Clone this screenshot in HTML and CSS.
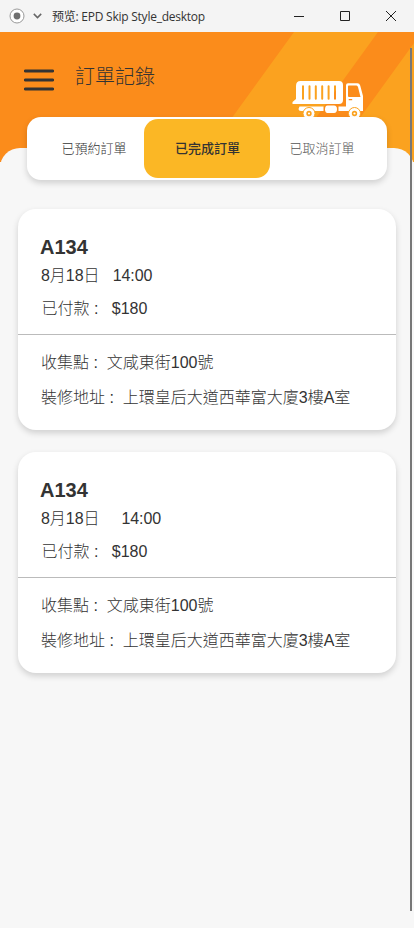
FILE: index.html
```html
<!DOCTYPE html>
<html lang="zh-Hant">
<head>
  <meta charset="UTF-8">
  <title>EPD Skip Style_desktop</title>
  <link rel="stylesheet" href="styles.css">
</head>
<body>
  <div class="titlebar">
    <svg class="app-icon" viewBox="0 0 16 16">
      <circle cx="8" cy="8" r="7" fill="#fff" stroke="#999" stroke-width="1"/>
      <circle cx="8" cy="8" r="3.4" fill="#707070"/>
    </svg>
    <svg class="chevron" viewBox="0 0 9 6"><path d="M.8 .9 4.5 4.6 8.2 .9" fill="none" stroke="#666" stroke-width="1.5"/></svg>
    <span class="window-title" lang="zh-Hans">预览: EPD Skip Style_desktop</span>
    <svg class="window-buttons" viewBox="0 0 104 12">
      <path d="M1 6.5h10M47.5 1.5h9v9h-9zM93 1l10 10M103 1 93 11" fill="none" stroke="#222"/>
    </svg>
  </div>

  <header class="header">
    <svg class="stripes" viewBox="0 0 414 130">
      <path d="M294 0h84l-94 130h-84zM414 11v119h-86z" fill="#fba21f"/>
    </svg>
    <svg class="menu" viewBox="0 0 30 22">
      <path d="M1.3 2h27.4M1.3 11h27.4M1.3 20h27.4" stroke="#333" stroke-width="2.8" stroke-linecap="round"/>
    </svg>
    <h1>訂單記錄</h1>
    <svg class="truck" viewBox="0 0 72 38">
      <!-- skip -->
      <path fill="#fff" fill-rule="evenodd" d="M8.500 0H47Q51 0 51 4V19Q51 23 47 23H0.500V21L4 18V5Q4 0 8.500 0zM11 4.200q-1 0-1 1v12.600q0 1 1 1t1-1V5.200q0-1-1-1zM17.500 4.200q-1 0-1 1v12.600q0 1 1 1t1-1V5.200q0-1-1-1zM23.800 4.200q-1 0-1 1v12.600q0 1 1 1t1-1V5.200q0-1-1-1zM30.200 4.200q-1 0-1 1v12.600q0 1 1 1t1-1V5.200q0-1-1-1zM36.600 4.200q-1 0-1 1v12.600q0 1 1 1t1-1V5.200q0-1-1-1zM43 4.200q-1 0-1 1v12.600q0 1 1 1t1-1V5.200q0-1-1-1z"/>
      <!-- cab -->
      <path fill="#fff" fill-rule="evenodd" d="M56 2.300H65.500Q67.500 2.300 68.200 4.500L71 15V30H54V4.300Q54 2.300 56 2.300zM56.800 4.500Q56 4.500 56 5.500V15Q56 16 57 16H68.500L66 6Q65.500 4.500 64.500 4.500zM56.700 18v1.200h3.500V18z"/>
      <!-- chassis -->
      <path fill="#fff" d="M7.500 25.500H31.500V30H9Q6.500 30 6.500 28zM35.500 24.500h6.500q3 0 3 3.700T42 32h-6.500q-2.500 0-2.500-3.700T35.500 24.500zM46.500 25.500h9V30h-9z"/>
      <g fill="#fff" stroke="#fba21f" stroke-width="1">
        <circle cx="17" cy="32.500" r="6"/>
        <circle cx="62.500" cy="32.500" r="6"/>
      </g>
      <g fill="none" stroke="#fba21f" stroke-width="1.600">
        <circle cx="17" cy="32.500" r="1.900"/>
        <circle cx="62.500" cy="32.500" r="1.900"/>
      </g>
    </svg>
  </header>

  <main class="sheet">
    <nav class="tabs">
      <a class="tab">已預約訂單</a>
      <a class="tab active">已完成訂單</a>
      <a class="tab">已取消訂單</a>
    </nav>

    <section class="card">
      <div class="summary">
        <h2>A134</h2>
        <p class="date">8月18日   14:00</p>
        <p class="paid">已付款 :   $180</p>
      </div>
      <div class="places">
        <p>收集點 :  文咸東街100號</p>
        <p>裝修地址 :  上環皇后大道西華富大廈3樓A室</p>
      </div>
    </section>

    <section class="card">
      <div class="summary">
        <h2>A134</h2>
        <p class="date">8月18日     14:00</p>
        <p class="paid">已付款 :   $180</p>
      </div>
      <div class="places">
        <p>收集點 :  文咸東街100號</p>
        <p>裝修地址 :  上環皇后大道西華富大廈3樓A室</p>
      </div>
    </section>
  </main>
  <div class="scrollbar"></div>
</body>
</html>
```
FILE: styles.css
```css
* {
  box-sizing: border-box;
  margin: 0;
  padding: 0;
}

body {
  height: 928px;
  overflow: hidden;
  background: #f7f7f7;
  color: #333;
  font-family: "Liberation Sans", "Noto Sans CJK TC", sans-serif;
  font-weight: 300;
}

svg {
  display: block;
}

/* Window title bar */
.titlebar {
  display: flex;
  align-items: center;
  height: 32px;
  padding: 0 17px 0 9px;
  background: #f4f4f4;
}

.app-icon {
  width: 16px;
  height: 16px;
}

.chevron {
  width: 9px;
  height: 6px;
  margin-left: 8px;
}

.window-title {
  margin-left: 10px;
  font: 400 12px "Open Sans", "Noto Sans CJK SC", sans-serif;
  letter-spacing: -0.24px;
  white-space: nowrap;
}

.window-buttons {
  width: 104px;
  height: 12px;
  margin-left: auto;
}

/* Header */
.header {
  position: relative;
  display: flex;
  align-items: flex-start;
  height: 130px;
  padding-left: 24px;
  background: #fb8c1b;
}

.stripes {
  position: absolute;
  inset: 0;
  width: 414px;
  height: 130px;
}

.menu {
  width: 30px;
  height: 22px;
  margin-top: 37px;
}

h1 {
  margin: 30px 0 0 21px;
  font-size: 20px;
  font-weight: 300;
  line-height: 30px;
}

.truck {
  position: relative;
  width: 72px;
  height: 38px;
  margin: 49px 50px 0 auto;
}

/* Rounded sheet that overlaps the header */
.sheet {
  position: relative;
  height: 780px;
  margin-top: -14px;
  padding: 0 18px;
  border-radius: 20px 20px 0 0;
  background: #f7f7f7;
}

.tabs {
  position: relative;
  top: -31px;
  display: grid;
  grid-template-columns: 115px 126px 1fr;
  height: 63px;
  margin: 0 9px -2px;
  padding: 2px;
  border-radius: 14px;
  background: #fff;
  box-shadow: 0 3px 6px rgba(0, 0, 0, 0.16);
}

.tab {
  display: flex;
  align-items: center;
  justify-content: center;
  padding-bottom: 2px;
  border-radius: 14px;
  font-size: 13px;
  color: #555;
}

.tab:first-child {
  padding-left: 15px;
  color: #333;
}

.tab:last-child {
  padding-right: 11px;
}

.tab.active {
  padding-left: 1px;
  background: #fbb725;
  color: #333;
  font-weight: 500;
}

/* Order cards */
.card {
  height: 221px;
  margin-bottom: 22px;
  border-radius: 18px;
  background: #fff;
  box-shadow: 0 3px 6px rgba(0, 0, 0, 0.16);
}

.card p {
  font-size: 16px;
  line-height: 24px;
  white-space: pre;
}

.summary {
  height: 126px;
  padding: 26px 22px 0;
  border-bottom: 1px solid #bbb;
}

h2 {
  font-size: 20px;
  line-height: 24px;
}

.card .date {
  padding: 5px 0 0 1px;
  letter-spacing: -0.05px;
}

.paid {
  padding: 9px 0 0 1.5px;
}

.places {
  display: grid;
  gap: 11px;
  padding: 16px 23px;
}

.scrollbar {
  position: absolute;
  top: 48px;
  left: 410px;
  width: 2px;
  height: 863px;
  background: #777;
}
```
